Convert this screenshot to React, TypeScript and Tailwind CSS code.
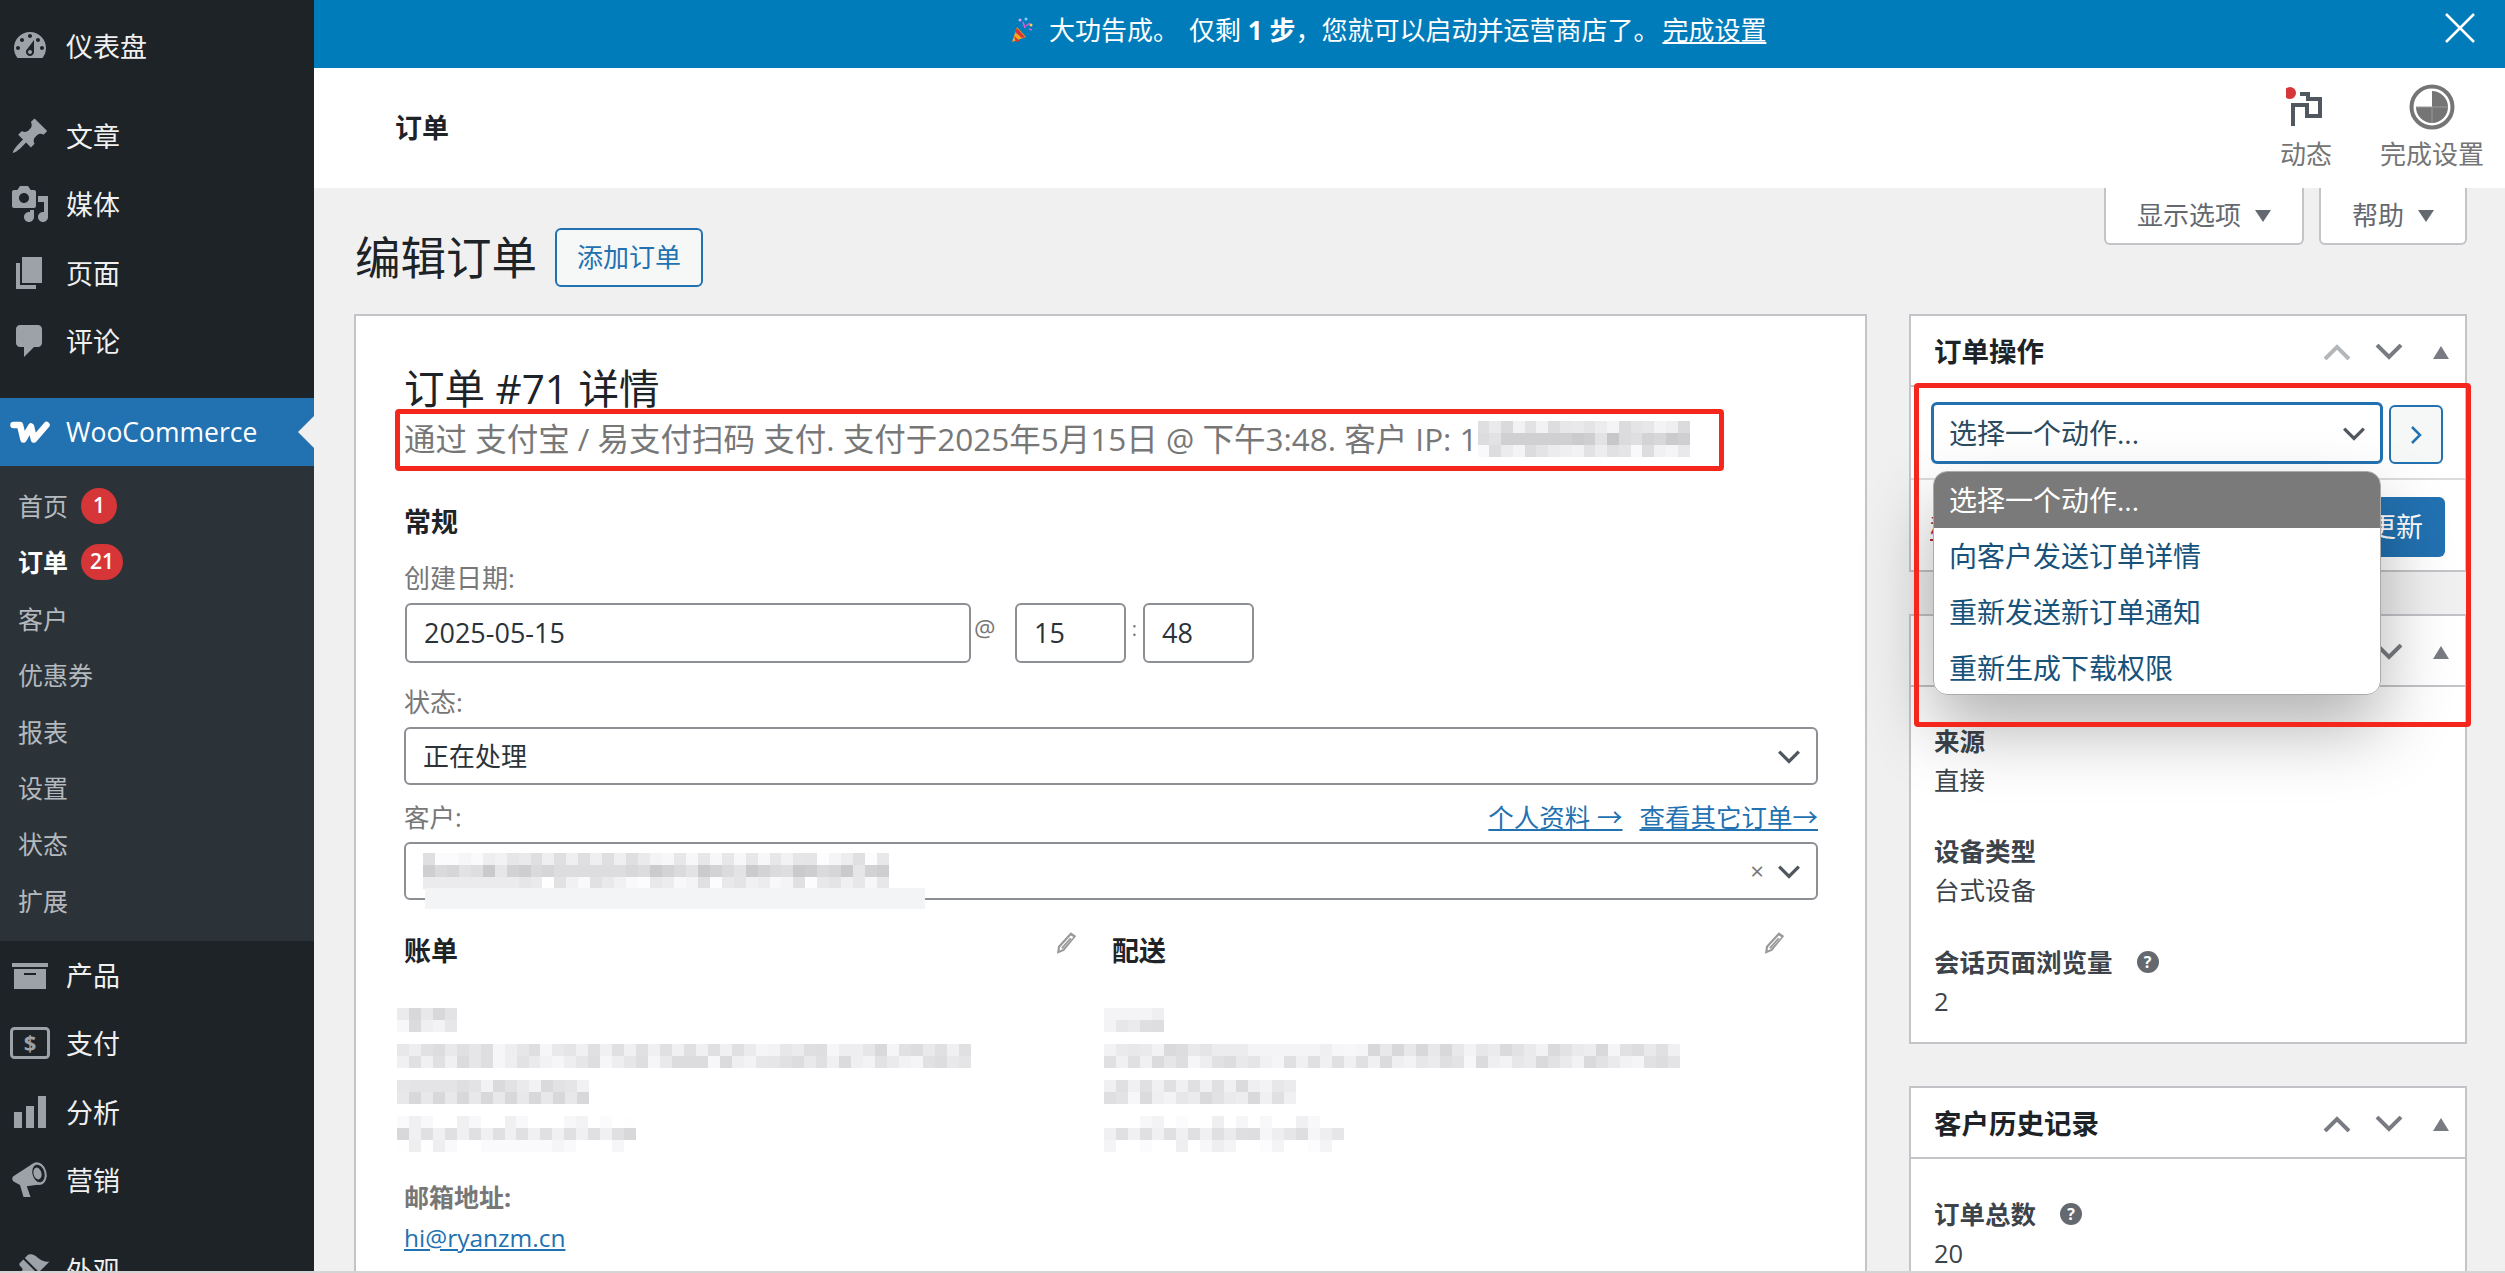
import React from 'react';

const font = '[font-family:"Open_Sans","Noto_Sans_CJK_SC",sans-serif]';

function Icon({ d, className = 'w-[40px] h-[40px]' }: { d: string; className?: string }) {
  return (
    <svg viewBox="0 0 20 20" className={className} fill="#9ca2a7" fillRule="evenodd">
      <path d={d} />
    </svg>
  );
}

const icons = {
  dashboard:
    'M3.76 16h12.48c1.1-1.37 1.76-3.11 1.76-5 0-4.42-3.58-8-8-8s-8 3.58-8 8c0 1.89.66 3.63 1.76 5zM10 4c.55 0 1 .45 1 1s-.45 1-1 1-1-.45-1-1 .45-1 1-1zM6 6c.55 0 1 .45 1 1s-.45 1-1 1-1-.45-1-1 .45-1 1-1zm8 0c.55 0 1 .45 1 1s-.45 1-1 1-1-.45-1-1 .45-1 1-1zm-5.37 5.55L12 7v6c0 1.1-.9 2-2 2s-2-.9-2-2c0-.57.24-1.08.63-1.45zM4 10c.55 0 1 .45 1 1s-.45 1-1 1-1-.45-1-1 .45-1 1-1zm12 0c.55 0 1 .45 1 1s-.45 1-1 1-1-.45-1-1 .45-1 1-1zm-5 3c0-.55-.45-1-1-1s-1 .45-1 1 .45 1 1 1 1-.45 1-1z',
  post: 'M10.44 3.02l1.82-1.82 6.36 6.35-1.83 1.82c-1.05-.68-2.48-.57-3.41.36l-.75.75c-.92.93-1.04 2.35-.35 3.41l-1.83 1.82-2.41-2.41-2.8 2.79c-.42.42-3.38 2.71-3.8 2.29s1.86-3.39 2.28-3.81l2.79-2.79L4.1 9.36l1.83-1.82c1.05.69 2.48.57 3.4-.36l.75-.75c.93-.92 1.05-2.35.36-3.41z',
  media:
    'M13 11V4c0-.55-.45-1-1-1h-1.67L9 1H5L3.67 3H2c-.55 0-1 .45-1 1v7c0 .55.45 1 1 1h10c.55 0 1-.45 1-1zM7 4.5c1.38 0 2.5 1.12 2.5 2.5S8.38 9.5 7 9.5 4.5 8.38 4.5 7 5.62 4.5 7 4.5zM14 6h5v10.5c0 1.38-1.12 2.5-2.5 2.5S14 17.88 14 16.5s1.12-2.5 2.5-2.5c.17 0 .34.02.5.05V9h-3V6zm-4 8.05V13h2v3.5c0 1.38-1.12 2.5-2.5 2.5S7 17.88 7 16.5 8.12 14 9.5 14c.17 0 .34.02.5.05z',
  page: 'M6 15V2h10v13H6zm-1 1h8v2H3V5h2v11z',
  comments: 'M5 2h9c1.1 0 2 .9 2 2v7c0 1.1-.9 2-2 2h-2l-5 5v-5H5c-1.1 0-2-.9-2-2V4c0-1.1.9-2 2-2z',
  archive: 'M19 4v2H1V4h18zM2 7h16v10H2V7zm11 3V9H7v1h6z',
  chart: 'M18 18V2h-4v16h4zm-6 0V7H8v11h4zm-6 0v-8H2v8h4z',
  brush:
    'M14.48 11.06L7.41 3.99l1.5-1.5c.5-.56 2.3-.47 3.51.32 1.21.8 1.43 1.28 2.91 2.1 1.18.64 2.45 1.26 4.45.85zm-.71.71L6.7 4.7 4.93 6.47c-.39.39-.39 1.02 0 1.41l1.06 1.06c.39.39.39 1.03 0 1.42-.6.6-1.43 1.11-2.21 1.69L1 13l5 5 2-3c.6-.8 1.1-1.6 1.7-2.2.39-.39 1.03-.39 1.42 0l1.06 1.06c.39.39 1.02.39 1.41 0z',
};

function PaymentIcon() {
  return (
    <svg viewBox="0 0 40 32" className="h-[32px] w-[40px]">
      <rect x="1.5" y="1.5" width="37" height="29" rx="3" fill="none" stroke="#9ca2a7" strokeWidth="3" />
      <text x="20" y="24" textAnchor="middle" fontSize="22" fontWeight="700" fill="#9ca2a7" fontFamily="Open Sans">
        $
      </text>
    </svg>
  );
}

function MegaphoneIcon() {
  return (
    <svg viewBox="0 0 40 40" className="h-[40px] w-[40px]" fill="#9ca2a7">
      <path d="M3 16.5c-1.2 1.5-1 4 1 5.3l6 3.2 3.5 12h7l-3.7-10.8L33 24 23 3.5z" />
      <ellipse cx="28" cy="13.5" rx="8.5" ry="11.5" transform="rotate(-15 28 13.5)" />
      <ellipse cx="28.5" cy="13.5" rx="6" ry="9" fill="#1d2327" transform="rotate(-15 28.5 13.5)" />
      <ellipse cx="27.5" cy="13.5" rx="4" ry="6" transform="rotate(-15 27.5 13.5)" />
    </svg>
  );
}

function WooLogo() {
  return (
    <svg viewBox="0 0 40 22" className="h-[22px] w-[40px]" fill="none" stroke="#fff" strokeWidth="6.5" strokeLinejoin="round" strokeLinecap="round">
      <path d="M3.5 4H10l3.5 14.5 7.5-13 3 13L36.5 4" />
    </svg>
  );
}

function MainItem({ icon, label, mt = '' }: { icon: React.ReactNode; label: string; mt?: string }) {
  return (
    <div className={`flex h-[68.5px] shrink-0 items-center ${mt}`}>
      <div className="flex w-[66px] shrink-0 justify-center pr-[6px]">{icon}</div>
      <span className="pt-[2px] text-[27px] text-[#f0f0f1]">{label}</span>
    </div>
  );
}

function SubItem({ label, badge, current }: { label: string; badge?: string; current?: boolean }) {
  return (
    <div className="flex h-[56.4px] items-center pl-[18px]">
      <span className={current ? 'pt-[2px] text-[25px] font-bold text-white' : 'pt-[2px] text-[25px] text-[#b4b9be]'}>{label}</span>
      {badge && (
        <span className="ml-[13px] flex h-[36px] min-w-[36px] items-center justify-center rounded-full bg-[#d63638] px-[9px] text-[21px] font-semibold text-white">
          {badge}
        </span>
      )}
    </div>
  );
}

function Sidebar() {
  return (
    <div className="flex w-[314px] shrink-0 flex-col overflow-hidden bg-[#1d2327] pt-[12px]">
      <MainItem icon={<Icon d={icons.dashboard} />} label="仪表盘" />
      <MainItem icon={<Icon d={icons.post} />} label="文章" mt="mt-[21px]" />
      <MainItem icon={<Icon d={icons.media} />} label="媒体" />
      <MainItem icon={<Icon d={icons.page} />} label="页面" />
      <MainItem icon={<Icon d={icons.comments} />} label="评论" />
      <div className="relative mt-[22px] flex h-[68px] shrink-0 items-center bg-[#2271b1]">
        <div className="flex w-[66px] shrink-0 justify-center pr-[6px]">
          <WooLogo />
        </div>
        <span className="pt-[2px] text-[26.5px] text-white">WooCommerce</span>
        <div className="absolute right-0 top-[18px] h-0 w-0 border-y-[16px] border-r-[16px] border-y-transparent border-r-[#f0f0f1]" />
      </div>
      <div className="shrink-0 bg-[#2c3338] pb-[12px] pt-[12px]">
        <SubItem label="首页" badge="1" />
        <SubItem label="订单" badge="21" current />
        <SubItem label="客户" />
        <SubItem label="优惠券" />
        <SubItem label="报表" />
        <SubItem label="设置" />
        <SubItem label="状态" />
        <SubItem label="扩展" />
      </div>
      <MainItem icon={<Icon d={icons.archive} />} label="产品" />
      <MainItem icon={<PaymentIcon />} label="支付" />
      <MainItem icon={<Icon d={icons.chart} />} label="分析" />
      <MainItem icon={<MegaphoneIcon />} label="营销" />
      <MainItem icon={<Icon d={icons.brush} />} label="外观" mt="mt-[21px]" />
    </div>
  );
}

function Mosaic({ w, h, seed, dark = 0, className = '' }: { w: number; h: number; seed: number; dark?: number; className?: string }) {
  const cols = Math.ceil(w / 12);
  const rows = Math.ceil(h / 12);
  const cells = [];
  let s = seed * 7919 + 13;
  for (let i = 0; i < cols * rows; i++) {
    s = (s * 1103515245 + 12345) & 0x7fffffff;
    const row = Math.floor(i / cols);
    const base = rows === 3 && row !== 1 ? 238 : 216;
    const g = base + ((s >> 8) % 32) - dark;
    cells.push(<div key={i} style={{ background: `rgb(${g},${g},${g + 2})` }} />);
  }
  return (
    <div
      className={`grid shrink-0 ${className}`}
      style={{ width: w, height: h, gridTemplateColumns: `repeat(${cols}, 1fr)`, gridTemplateRows: `repeat(${rows}, 1fr)` }}
    >
      {cells}
    </div>
  );
}

function Chevron({ className = 'w-[24px] h-[15px]', color = '#50575e' }: { className?: string; color?: string }) {
  return (
    <svg viewBox="0 0 22 13" className={className} fill="none" stroke={color} strokeWidth="3">
      <path d="M2 2l9 9 9-9" />
    </svg>
  );
}

function Pencil() {
  return (
    <svg viewBox="0 0 20 20" className="h-[24px] w-[24px]" fill="#999">
      <path d="M14 1l4.5 3.2-10 12.3L2.5 19l.8-6.3L14 1zm0 2.8L5 13.6l-.3 2.7 2.5-1.1 9-10.2L14 3.8z" />
      <path d="M13.4 5.6l1.3.9-7.5 8.3-1.3-.9z" />
    </svg>
  );
}

function BoxHeader({ title, upColor = '#787c82' }: { title: string; upColor?: string }) {
  return (
    <div className="flex h-[71px] items-center border-b-2 border-[#c3c4c7] pl-[23px] pr-[16px] pt-[3px]">
      <span className="flex-1 text-[27.5px] font-bold text-[#1d2327]">{title}</span>
      <svg viewBox="0 0 28 16" className="h-[16px] w-[28px]" fill="none" stroke={upColor} strokeWidth="4">
        <path d="M2 15L14 3l12 12" />
      </svg>
      <svg viewBox="0 0 28 16" className="ml-[24px] h-[16px] w-[28px]" fill="none" stroke="#787c82" strokeWidth="4">
        <path d="M2 1l12 12L26 1" />
      </svg>
      <div className="ml-[30px] h-0 w-0 border-x-[8px] border-b-[13px] border-x-transparent border-b-[#787c82]" />
    </div>
  );
}

function HelpTip() {
  return (
    <span className="ml-[24px] flex h-[22px] w-[22px] items-center justify-center rounded-full bg-[#646970] text-[16px] font-bold text-white">
      ?
    </span>
  );
}

function Stat({ label, value, tip, className = '' }: { label: string; value: string; tip?: boolean; className?: string }) {
  return (
    <div className={className}>
      <div className="flex h-[36px] items-center text-[25.5px] font-bold text-[#3c434a]">
        {label}
        {tip && <HelpTip />}
      </div>
      <div className="mt-[3px] flex h-[36px] items-center text-[25.5px] text-[#3c434a]">{value}</div>
    </div>
  );
}

function FieldLabel({ children, className = '' }: { children: React.ReactNode; className?: string }) {
  return <div className={`flex h-[36px] items-center text-[26px] text-[#777] ${className}`}>{children}</div>;
}

function OrderCard() {
  return (
    <div className="w-[1513px] shrink-0 border-2 border-b-0 border-[#c3c4c7] bg-white pl-[48px] pr-[47px] pt-[49px]">
      <div className="flex h-[49px] items-center text-[40.5px] text-[#1d2327]">订单 #71 详情</div>
      <div className="flex h-[50px] items-center text-[31.5px] text-[#777] whitespace-nowrap">
        <span>通过 支付宝 / 易支付扫码 支付. 支付于2025年5月15日 @ 下午3:48. 客户 IP: 1</span>
        <Mosaic w={212} h={36} seed={3} dark={20} />
      </div>

      <div className="mt-[38px] flex h-[40px] items-center text-[27px] font-bold text-[#1d2327]">常规</div>
      <FieldLabel className="mt-[18px]">创建日期:</FieldLabel>
      <div className="ml-[1px] mt-[7px] flex h-[60px] items-stretch text-[27px] text-[#2c3338]">
        <div className="flex w-[566px] items-center rounded-[6px] border-2 border-[#8c8f94] pl-[17px]">2025-05-15</div>
        <span className="ml-[3px] w-[41px] text-[24px] leading-[50px] text-[#777]">@</span>
        <div className="flex w-[111px] items-center rounded-[6px] border-2 border-[#8c8f94] pl-[17px]">15</div>
        <span className="w-[17px] text-center text-[20px] leading-[52px] text-[#777]">:</span>
        <div className="flex w-[111px] items-center rounded-[6px] border-2 border-[#8c8f94] pl-[17px]">48</div>
      </div>

      <FieldLabel className="mt-[21px]">状态:</FieldLabel>
      <div className="mt-[7px] flex h-[58px] items-center rounded-[6px] border-2 border-[#8c8f94] pl-[17px] pr-[15px] text-[26px] text-[#2c3338]">
        <span className="flex-1">正在处理</span>
        <Chevron />
      </div>

      <div className="mt-[14px] flex h-[36px] items-center justify-between text-[25.5px]">
        <span className="text-[#777]">客户:</span>
        <span className="flex gap-[17px] text-[#2271b1] underline">
          <span>个人资料 →</span>
          <span>查看其它订单→</span>
        </span>
      </div>
      <div className="relative mt-[7px] flex h-[58px] items-center rounded-[6px] border-2 border-[#8c8f94] pl-[17px] pr-[15px]">
        <Mosaic w={466} h={36} seed={5} dark={15} />
        <span className="flex-1" />
        <span className="mr-[13px] text-[24px] leading-none text-[#777]">×</span>
        <Chevron />
        <div className="absolute left-[19px] top-[44px] h-[21px] w-[500px] bg-[#f3f4f5]" />
      </div>

      <div className="mt-[31px] grid grid-cols-[708px_1fr]">
        <div className="pr-[34px]">
          <div className="flex h-[40px] items-start justify-between">
            <span className="text-[27px] font-bold leading-[40px] text-[#1d2327]">账单</span>
            <Pencil />
          </div>
          <div className="-ml-[7px] mt-[37px] flex flex-col gap-[12px]">
            <Mosaic w={60} h={24} seed={11} />
            <Mosaic w={574} h={24} seed={12} />
            <Mosaic w={192} h={24} seed={13} />
            <Mosaic w={239} h={36} seed={14} />
          </div>
        </div>
        <div className="pr-[32px]">
          <div className="flex h-[40px] items-start justify-between">
            <span className="text-[27px] font-bold leading-[40px] text-[#1d2327]">配送</span>
            <Pencil />
          </div>
          <div className="-ml-[8px] mt-[37px] flex flex-col gap-[12px]">
            <Mosaic w={60} h={24} seed={21} />
            <Mosaic w={576} h={24} seed={22} />
            <Mosaic w={192} h={24} seed={23} />
            <Mosaic w={240} h={36} seed={24} />
          </div>
        </div>
      </div>

      <div className="mt-[28px] flex h-[36px] items-center text-[25px] font-bold text-[#777]">邮箱地址:</div>
      <div className="mt-[4px] flex h-[36px] items-center text-[24.5px] text-[#2271b1] underline">hi@ryanzm.cn</div>
    </div>
  );
}

function RightColumn() {
  return (
    <div className="flex w-[558px] shrink-0 flex-col">
      <div className="h-[258px] border-2 border-[#c3c4c7] bg-white">
        <BoxHeader title="订单操作" upColor="#b4b7ba" />
        <div className="flex h-[93px] items-start gap-[6px] border-b-2 border-[#dcdcde] pl-[20px] pr-[20px] pt-[15px]">
          <div className="flex h-[62px] w-[452px] items-center rounded-[6px] border-[3px] border-[#2271b1] pl-[15px] pr-[14px] text-[28px] text-[#2c4a60]">
            <span className="flex-1">选择一个动作...</span>
            <Chevron />
          </div>
          <div className="mt-[3px] flex h-[59px] w-[54px] items-center justify-center rounded-[6px] border-2 border-[#2271b1] bg-[#f6f7f7]">
            <svg viewBox="0 0 12 20" className="h-[20px] w-[12px]" fill="none" stroke="#2271b1" strokeWidth="2.5">
              <path d="M2 2l8 8-8 8" />
            </svg>
          </div>
        </div>
        <div className="flex h-[90px] items-center justify-between pl-[19px] pr-[20px] pt-[4px]">
          <span className="text-[26px] text-[#b32d2e] underline">移至回收站</span>
          <span className="flex h-[60px] w-[98px] items-center justify-center rounded-[6px] bg-[#2271b1] text-[27px] text-white">更新</span>
        </div>
      </div>

      <div className="mt-[42px] h-[430px] border-2 border-[#c3c4c7] bg-white">
        <BoxHeader title="订单归因" />
        <div className="pl-[23px] pt-[36px]">
          <Stat label="来源" value="直接" />
          <Stat label="设备类型" value="台式设备" className="mt-[35px]" />
          <Stat label="会话页面浏览量" value="2" tip className="mt-[36px]" />
        </div>
      </div>

      <div className="mt-[42px] flex-1 border-2 border-b-0 border-[#c3c4c7] bg-white">
        <BoxHeader title="客户历史记录" />
        <div className="pl-[23px] pt-[37px]">
          <Stat label="订单总数" value="20" tip />
        </div>
      </div>
    </div>
  );
}

function PartyPopper() {
  return (
    <svg viewBox="0 0 22 26" className="mr-[16px] h-[26px] w-[22px]">
      <path d="M1 25l5-15 9 10z" fill="#f5a623" />
      <path d="M3 19l6 5-4 1zM6 11l8 9-3 1-7-6z" fill="#d63638" />
      <circle cx="9" cy="3" r="1.5" fill="#e2a0ff" />
      <circle cx="15" cy="2" r="1.5" fill="#7ed6ff" />
      <circle cx="20" cy="8" r="1.5" fill="#ffd24d" />
      <path d="M12 5l2 6M18 12l3 1M15 9l4-3" stroke="#e35bd8" strokeWidth="1.5" />
    </svg>
  );
}

function TopBars() {
  return (
    <>
      <div className="relative flex h-[68px] shrink-0 items-center bg-[#007cba] pb-[8px] pl-[697px] text-[26px] text-white whitespace-nowrap">
        <PartyPopper />
        <span>大功告成。</span>
        <span className="ml-[10px]">
          仅剩 <b>1 步</b>，您就可以启动并运营商店了。
        </span>
        <span className="ml-[3px] underline">完成设置</span>
        <svg viewBox="0 0 30 30" className="absolute right-[30px] top-[13px] h-[30px] w-[30px]" fill="none" stroke="#fff" strokeWidth="2.5">
          <path d="M1 1l28 28M29 1L1 29" />
        </svg>
      </div>
      <div className="flex h-[120px] shrink-0 items-center bg-white pl-[81px] pr-[21px]">
        <span className="flex-1 text-[27px] font-bold text-[#1d2327]">订单</span>
        <div className="flex flex-col items-center pr-[48px]">
          <svg viewBox="0 0 40 46" className="h-[46px] w-[40px]">
            <path d="M14 10h8v5h12v17H21V21H7M7 19v23" fill="none" stroke="#50575e" strokeWidth="4" />
            <circle cx="4" cy="9" r="6" fill="#d63638" />
          </svg>
          <span className="mt-[6px] text-[26px] leading-[36px] text-[#757575]">动态</span>
        </div>
        <div className="flex flex-col items-center">
          <svg viewBox="0 0 46 46" className="h-[46px] w-[46px]">
            <circle cx="23" cy="23" r="20.5" fill="#fff" stroke="#757575" strokeWidth="4" />
            <path d="M23 23V7a16 16 0 1 1-16 16z" fill="#757575" />
            <path d="M23 23v16M7 23h32" stroke="#9a9a9a" strokeWidth="1" />
          </svg>
          <span className="mt-[6px] text-[26px] leading-[36px] text-[#757575]">完成设置</span>
        </div>
      </div>
    </>
  );
}

function Triangle() {
  return <div className="ml-[14px] h-0 w-0 border-x-[8px] border-t-[12px] border-x-transparent border-t-[#646970]" />;
}

export default function App() {
  return (
    <div className={`relative flex h-screen w-full flex-col overflow-hidden bg-[#f0f0f1] ${font}`}>
      <div className="flex min-h-0 flex-1">
        <Sidebar />
        <div className="flex min-w-0 flex-1 flex-col">
          <TopBars />
          <div className="flex min-h-0 flex-1 flex-col overflow-hidden">
            <div className="flex h-[57px] shrink-0 justify-end gap-[15px] pr-[38px]">
              <div className="flex w-[200px] items-center justify-center rounded-b-[6px] border-2 border-t-0 border-[#c3c4c7] bg-white text-[26px] text-[#646970]">
                显示选项
                <Triangle />
              </div>
              <div className="flex w-[148px] items-center justify-center rounded-b-[6px] border-2 border-t-0 border-[#c3c4c7] bg-white text-[26px] text-[#646970]">
                帮助
                <Triangle />
              </div>
            </div>
            <div className="-mt-[17px] flex h-[59px] shrink-0 items-center pl-[41px]">
              <span className="text-[45.5px] leading-none text-[#1d2327]">编辑订单</span>
              <span className="ml-[18px] flex h-[59px] w-[148px] items-center justify-center rounded-[6px] border-2 border-[#2271b1] bg-[#f6f7f7] text-[26px] text-[#2271b1]">
                添加订单
              </span>
            </div>
            <div className="mt-[27px] flex min-h-0 flex-1 gap-[42px] pl-[40px]">
              <OrderCard />
              <RightColumn />
            </div>
          </div>
        </div>
      </div>
      <div className="h-[2px] shrink-0 bg-[#d4d4d4]" />

      <div className="pointer-events-none absolute left-[1933px] top-[471px] h-[224px] w-[448px] rounded-[14px] shadow-[0_34px_70px_rgba(0,0,0,0.3)]" />
      <div className="absolute left-[1933px] top-[471px] h-[224px] w-[448px] overflow-hidden rounded-[14px] border border-[#aaa] bg-white text-[28px] text-[#17527a]">
        <div className="flex h-[56px] items-center bg-[#7a7a7a] pl-[15px] text-white">选择一个动作...</div>
        <div className="flex h-[56px] items-center pl-[15px]">向客户发送订单详情</div>
        <div className="flex h-[56px] items-center pl-[15px]">重新发送新订单通知</div>
        <div className="flex h-[56px] items-center pl-[15px]">重新生成下载权限</div>
      </div>
      <div className="pointer-events-none absolute left-[395px] top-[409px] h-[62px] w-[1329px] rounded-[4px] border-[5px] border-[#f5261b]" />
      <div className="pointer-events-none absolute left-[1914px] top-[383px] h-[344px] w-[557px] rounded-[4px] border-[5px] border-[#f5261b]" />
    </div>
  );
}
